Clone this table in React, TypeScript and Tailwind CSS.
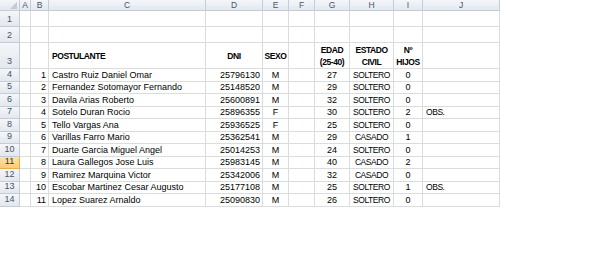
import React from "react";

const cols = ["A", "B", "C", "D", "E", "F", "G", "H", "I", "J"];
const widths = [20, 11, 18, 157, 57, 26, 26, 35, 44, 29, 77];

type Row = [number, string, string, string, string, string, string, string];
const data: Row[] = [
  [1, "Castro Ruiz Daniel Omar", "25796130", "M", "27", "SOLTERO", "0", ""],
  [2, "Fernandez Sotomayor Fernando", "25148520", "M", "29", "SOLTERO", "0", ""],
  [3, "Davila Arias Roberto", "25600891", "M", "32", "SOLTERO", "0", ""],
  [4, "Sotelo Duran Rocio", "25896355", "F", "30", "SOLTERO", "2", "OBS."],
  [5, "Tello Vargas Ana", "25936525", "F", "25", "SOLTERO", "0", ""],
  [6, "Varillas Farro Mario", "25362541", "M", "29", "CASADO", "1", ""],
  [7, "Duarte Garcia Miguel Angel", "25014253", "M", "24", "SOLTERO", "0", ""],
  [8, "Laura Gallegos Jose Luis", "25983145", "M", "40", "CASADO", "2", ""],
  [9, "Ramirez Marquina Victor", "25342006", "M", "32", "CASADO", "0", ""],
  [10, "Escobar Martinez Cesar Augusto", "25177108", "M", "25", "SOLTERO", "1", "OBS."],
  [11, "Lopez Suarez Arnaldo", "25090830", "M", "26", "SOLTERO", "0", ""],
];

const cell = "border-r border-b border-[#dadcdd] flex items-center overflow-hidden whitespace-nowrap";
const hdr = "border-r border-b border-[#c5ccd6] bg-gradient-to-b from-[#f4f6f9] to-[#e3e8ef] flex items-center justify-center text-[#4a5568]";
const caps = "text-[8.5px] tracking-[-0.45px]";
const bold = "font-bold text-[8.5px] tracking-[-0.45px]";

function RowHeader({ n, h, active }: { n: number; h: string; active?: boolean }) {
  return (
    <div
      className={
        active
          ? `border-r border-b border-[#e8b04a] bg-gradient-to-b from-[#fbe3a8] to-[#f6cd78] flex items-end justify-center pb-[1px] text-[#333] ${h}`
          : `${hdr} items-end pb-[1px] ${h}`
      }
    >
      {n}
    </div>
  );
}

export default function App() {
  const gridTemplateColumns = widths.map((w) => `${w}px`).join(" ");
  return (
    <div
      className="w-[600px] h-[277px] bg-white text-black text-[9px] leading-[12px]"
      style={{ fontFamily: '"Liberation Sans", Arial, sans-serif' }}
    >
      <div className="grid w-[500px]" style={{ gridTemplateColumns }}>
        {/* column header row */}
        <div className={`${hdr} h-[11px] relative`}>
          <svg className="absolute right-[2px] bottom-[1px]" width="7" height="7" viewBox="0 0 7 7">
            <polygon points="7,0 7,7 0,7" fill="#c3cad3" />
          </svg>
        </div>
        {cols.map((c) => (
          <div key={c} className={`${hdr} h-[11px] text-[8.5px] leading-[10px]`}>
            {c}
          </div>
        ))}

        {/* row 1 & 2 */}
        {[1, 2].map((r) => (
          <React.Fragment key={r}>
            <RowHeader n={r} h="h-[16px]" />
            {cols.map((c) => (
              <div key={c} className={`${cell} h-[16px]`} />
            ))}
          </React.Fragment>
        ))}

        {/* row 3 headers */}
        <RowHeader n={3} h="h-[26px]" />
        <div className={`${cell} h-[26px]`} />
        <div className={`${cell} h-[26px]`} />
        <div className={`${cell} h-[26px] ${bold} pl-[3px]`}>POSTULANTE</div>
        <div className={`${cell} h-[26px] ${bold} justify-center`}>DNI</div>
        <div className={`${cell} h-[26px] ${bold} justify-center`}>SEXO</div>
        <div className={`${cell} h-[26px]`} />
        <div className={`${cell} h-[26px] ${bold} justify-center text-center`}>
          <div>
            EDAD
            <br />
            (25-40)
          </div>
        </div>
        <div className={`${cell} h-[26px] ${bold} justify-center text-center`}>
          <div>
            ESTADO
            <br />
            CIVIL
          </div>
        </div>
        <div className={`${cell} h-[26px] ${bold} justify-center text-center`}>
          <div>
            Nº
            <br />
            HIJOS
          </div>
        </div>
        <div className={`${cell} h-[26px]`} />

        {data.map((d, i) => {
          const rn = i + 4;
          const h = "h-[12.5px]";
          return (
            <React.Fragment key={rn}>
              <RowHeader n={rn} h={h} active={rn === 11} />
              <div className={`${cell} ${h}`} />
              <div className={`${cell} ${h} justify-end pr-[2px]`}>{d[0]}</div>
              <div className={`${cell} ${h} pl-[3px]`}>{d[1]}</div>
              <div className={`${cell} ${h} justify-end pr-[2px]`}>{d[2]}</div>
              <div className={`${cell} ${h} justify-center`}>{d[3]}</div>
              <div className={`${cell} ${h}`} />
              <div className={`${cell} ${h} justify-center`}>{d[4]}</div>
              <div className={`${cell} ${h} justify-center ${caps}`}>{d[5]}</div>
              <div className={`${cell} ${h} justify-center`}>{d[6]}</div>
              <div className={`${cell} ${h} pl-[3px] ${caps}`}>{d[7]}</div>
            </React.Fragment>
          );
        })}
      </div>
    </div>
  );
}
